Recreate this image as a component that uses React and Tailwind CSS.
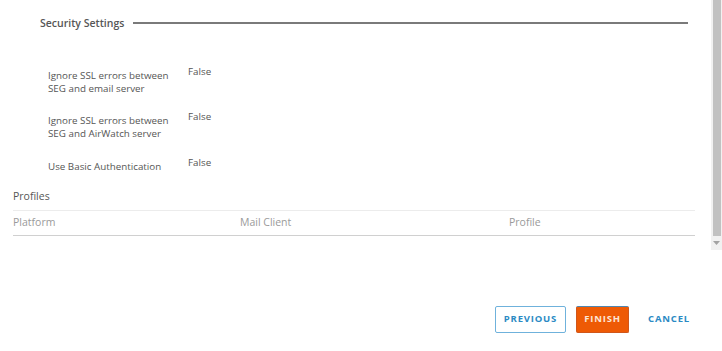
import React from "react";

const rows = [
  { label: ["Ignore SSL errors between", "SEG and email server"], value: "False", h: "h-[45px]" },
  { label: ["Ignore SSL errors between", "SEG and AirWatch server"], value: "False", h: "h-[46px]" },
  { label: ["Use Basic Authentication"], value: "False", h: "h-[33px]" },
];

function SettingRow({ label, value, h }) {
  return (
    <div className={`flex ${h}`}>
      <div className="w-[140px] pl-[48px] pt-[4px] box-content text-[9.8px] leading-[13px] text-[#555]">
        {label.map((l) => (
          <div key={l} className="whitespace-nowrap">{l}</div>
        ))}
      </div>
      <div className="text-[9.8px] leading-[13px] text-[#555]">{value}</div>
    </div>
  );
}

function Scrollbar() {
  return (
    <div className="w-[11px] h-[250px] bg-[#f1f1f1] flex flex-col items-center">
      <div className="w-[8px] h-[236px] bg-[#c1c1c1]" />
      <div className="flex-1 flex items-center justify-center">
        <svg width="7" height="4" viewBox="0 0 7 4">
          <path d="M0 0 L7 0 L3.5 4 Z" fill="#a3a3a3" />
        </svg>
      </div>
    </div>
  );
}

export default function App() {
  return (
    <div className="w-[722px] h-[351px] bg-white overflow-hidden font-['Open_Sans',sans-serif]">
      <div className="flex h-[250px]">
        <div className="flex-1 overflow-hidden">
          {/* Security settings header */}
          <div className="flex items-center pt-[16px] pl-[40px] pr-[23px]">
            <span className="text-[10.5px] leading-[14px] font-semibold text-[#565656] whitespace-nowrap">
              Security Settings
            </span>
            <div className="flex-1 ml-[9px] h-[1.5px] bg-[#7a7a7a]" />
          </div>

          <div className="mt-[35px]">
            {rows.map((r, i) => (
              <SettingRow key={i} {...r} />
            ))}
          </div>

          <div className="pl-[13px] text-[10.5px] leading-[14px] text-[#565656]">Profiles</div>

          <div className="ml-[13px] mr-[16px] mt-[7px] border-t border-[#ececec] border-b border-b-[#d0d0d0] h-[26px] flex items-center text-[10.5px] text-[#9a9a9a]">
            <div className="w-[227px]">Platform</div>
            <div className="w-[269px]">Mail Client</div>
            <div>Profile</div>
          </div>
        </div>
        <Scrollbar />
      </div>

      <div className="flex justify-end items-center pr-[23px] mt-[56px]">
        <button className="h-[27px] w-[71px] border border-[#6fb2dc] rounded-[2px] text-[9.5px] font-bold tracking-[0.8px] text-[#2b8ac4]">
          PREVIOUS
        </button>
        <button className="ml-[10px] h-[27px] w-[53px] bg-[#ee5a05] border border-[#d0561a] border-t-[#4f86b0] rounded-[2px] text-[9.5px] font-bold tracking-[0.8px] text-[#fde6d6]">
          FINISH
        </button>
        <button className="ml-[10px] h-[27px] w-[60px] text-[9.5px] font-bold tracking-[0.8px] text-[#2b8ac4]">
          CANCEL
        </button>
      </div>
    </div>
  );
}
